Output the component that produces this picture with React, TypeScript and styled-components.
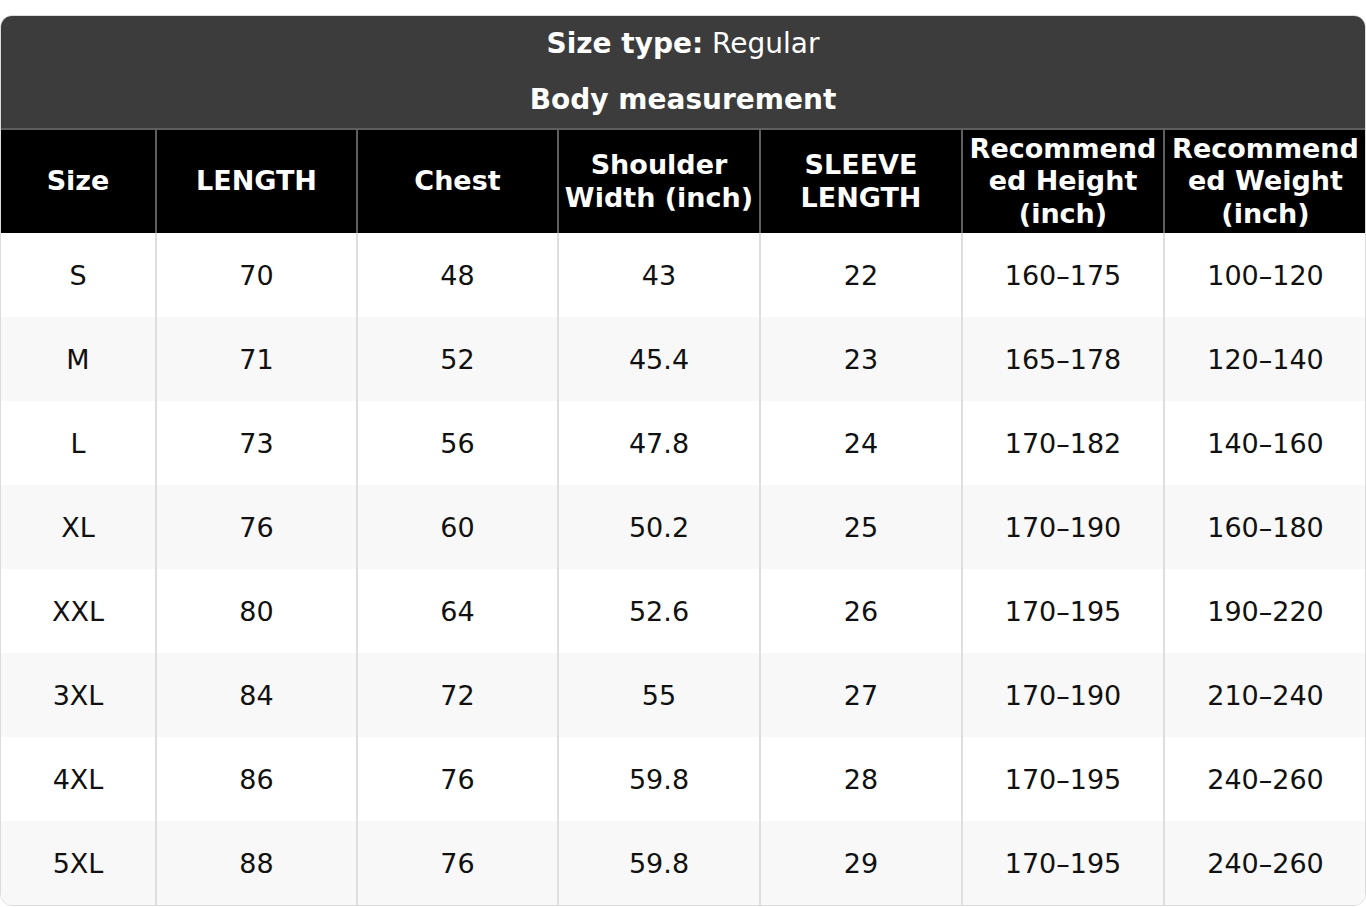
import React from "react";
import styled, { createGlobalStyle } from "styled-components";

const GlobalStyle = createGlobalStyle`
  html, body {
    margin: 0;
    padding: 0;
    background: #ffffff;
  }
  body {
    padding-top: 15px;
    font-family: "DejaVu Sans", "Liberation Sans", sans-serif;
  }
`;

const Card = styled.div`
  width: 1366px;
  box-sizing: border-box;
  border: 1px solid #dcdcdc;
  border-radius: 12px;
  overflow: hidden;
  background: #ffffff;
`;

const Caption = styled.div`
  background: #3c3c3c;
  color: #ffffff;
  text-align: center;
  font-size: 28px;
`;

const CaptionLine = styled.div<{ bold?: boolean }>`
  padding: 12px 0;
  line-height: 32px;
  font-weight: ${({ bold }) => (bold ? 700 : 400)};

  b {
    font-weight: 700;
  }
`;

const Table = styled.table`
  width: 100%;
  border-collapse: collapse;
  table-layout: fixed;
  font-size: 27px;
`;

const HeadCell = styled.th`
  background: #000000;
  color: #ffffff;
  font-weight: 700;
  height: 104px;
  padding: 0 3px;
  line-height: 32.5px;
  text-align: center;
  border: 2px solid #5e5e5e;
  border-bottom: none;
  overflow-wrap: anywhere;
  box-sizing: border-box;

  &:first-child {
    border-left: none;
  }
  &:last-child {
    border-right: none;
  }
`;

const Row = styled.tr<{ shaded: boolean }>`
  background: ${({ shaded }) => (shaded ? "#f8f8f8" : "#ffffff")};
`;

const Cell = styled.td`
  height: 84px;
  padding: 0;
  text-align: center;
  color: #111111;
  border-right: 2px solid #dedede;

  &:last-child {
    border-right: none;
  }
`;

const columns = [
  { label: "Size", width: 155 },
  { label: "LENGTH", width: 201 },
  { label: "Chest", width: 201 },
  { label: "Shoulder Width (inch)", width: 202 },
  { label: "SLEEVE LENGTH", width: 202 },
  { label: "Recommended Height (inch)", width: 202 },
  { label: "Recommended Weight (inch)", width: 202 },
];

const rows = [
  ["S", "70", "48", "43", "22", "160–175", "100–120"],
  ["M", "71", "52", "45.4", "23", "165–178", "120–140"],
  ["L", "73", "56", "47.8", "24", "170–182", "140–160"],
  ["XL", "76", "60", "50.2", "25", "170–190", "160–180"],
  ["XXL", "80", "64", "52.6", "26", "170–195", "190–220"],
  ["3XL", "84", "72", "55", "27", "170–190", "210–240"],
  ["4XL", "86", "76", "59.8", "28", "170–195", "240–260"],
  ["5XL", "88", "76", "59.8", "29", "170–195", "240–260"],
];

const App = () => {
  return (
    <>
      <GlobalStyle />
      <Card>
        <Caption>
          <CaptionLine>
            <b>Size type:</b> Regular
          </CaptionLine>
          <CaptionLine bold>Body measurement</CaptionLine>
        </Caption>
        <Table>
          <colgroup>
            {columns.map((c) => (
              <col key={c.label} style={{ width: c.width }} />
            ))}
          </colgroup>
          <thead>
            <tr>
              {columns.map((c) => (
                <HeadCell key={c.label}>{c.label}</HeadCell>
              ))}
            </tr>
          </thead>
          <tbody>
            {rows.map((r, i) => (
              <Row key={r[0]} shaded={i % 2 === 1}>
                {r.map((v, j) => (
                  <Cell key={j}>{v}</Cell>
                ))}
              </Row>
            ))}
          </tbody>
        </Table>
      </Card>
    </>
  );
};

export default App;
